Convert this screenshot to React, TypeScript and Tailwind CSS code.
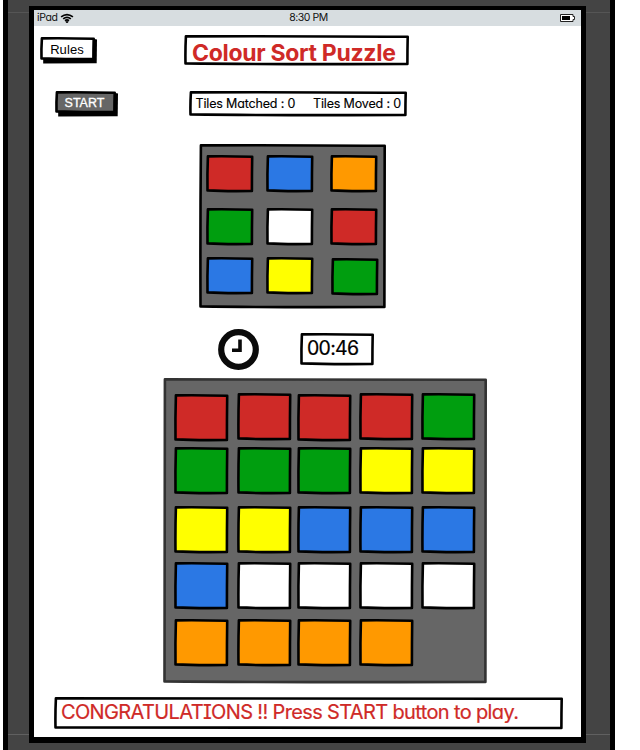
import type { ReactNode } from "react";

type FrameProps = {
  w: number;
  h: number;
  fill?: string;
  stroke?: string;
  line?: number;
  shadow?: boolean;
  className?: string;
  children?: ReactNode;
};

function Sketch({ w, h, fill = "#fff", stroke = "#000", line = 2.6, shadow, className = "", children }: FrameProps) {
  const r = w - 1.2;
  const b = h - 2;
  const outline = `M1.9 1.4 Q${w * 0.4} 0.9 ${r - 0.1} 1.8 Q${r - 0.4} ${h * 0.5} ${r - 0.4} ${b} Q${w * 0.4} ${b + 0.5} 1.5 ${b - 0.6} Q1.2 ${h * 0.5} 1.9 1.4Z`;
  return (
    <div className={`relative shrink-0 ${className}`} style={{ width: w, height: h }}>
      <svg className="absolute inset-0 overflow-visible" width={w} height={h}>
        {shadow && <path d={`M3 4 L${w - 2} 1.8 L${w + 2} 2.5 L${w + 1.7} ${h + 2.2} L3.2 ${h + 2.5}Z`} fill="#000" />}
        <path d={outline} fill={fill} stroke={stroke} strokeWidth={line} strokeLinejoin="round" strokeLinecap="round" />
      </svg>
      <div className="relative flex h-full items-center">{children}</div>
    </div>
  );
}

const RED = "#cf2a27";
const BLUE = "#2b78e4";
const ORANGE = "#ff9900";
const GREEN = "#009e0f";
const WHITE = "#ffffff";
const YELLOW = "#ffff00";

const target = [
  [RED, BLUE, ORANGE],
  [GREEN, WHITE, RED],
  [BLUE, YELLOW, GREEN],
];

const board = [
  [RED, RED, RED, RED, GREEN],
  [GREEN, GREEN, GREEN, YELLOW, YELLOW],
  [YELLOW, YELLOW, BLUE, BLUE, BLUE],
  [BLUE, WHITE, WHITE, WHITE, WHITE],
  [ORANGE, ORANGE, ORANGE, ORANGE],
];

const hand = "font-['Inter',sans-serif] [font-feature-settings:'cv11','cv08'] whitespace-nowrap leading-none";

function Rail({ className }: { className: string }) {
  return (
    <div className={`flex shrink-0 flex-col justify-between bg-[#444] pt-3 pb-[15px] ${className}`}>
      <div className="h-px bg-[#555]" />
      <div className="h-px bg-[#606060]" />
    </div>
  );
}

export default function App() {
  return (
    <div className="flex h-[750px] w-[640px] overflow-hidden bg-white pl-[3px]">
      <Rail className="w-[26px] border-l-[5px] border-black" />
      <div className="h-full w-[557px] shrink-0 bg-[#444] pt-[6px]">
        <div className="h-[737px] border-x-[5px] border-t-[4px] border-b-[6px] border-black bg-white">
          <header className={`grid h-4 grid-cols-3 items-center bg-[#d7dde0] pr-[6px] pl-[3px] text-[10.5px] text-[#111] ${hand}`}>
            <div className="flex items-center gap-[3px]">
              <span className="tracking-[-0.4px]">iPad</span>
              <svg width="14" height="10" viewBox="0 0 15 11" fill="none" stroke="#000" strokeWidth="1.9">
                <path d="M1 4.3Q7.5-.8 14 4.3M3.3 6.5Q7.5 3 11.7 6.5M5.3 8.5Q7.5 6.7 9.7 8.5" />
                <circle cx="7.5" cy="9.6" r=".5" />
              </svg>
            </div>
            <span className="pl-[5px] text-center tracking-[-0.5px]">8:30 PM</span>
            <svg className="justify-self-end" width="15" height="8" viewBox="0 0 15 8">
              <path d="M.5.5H13V2.5H14.5V5.5H13V7.5H.5Z" fill="#fff" stroke="#222" />
              <path d="M2 2H10V6H2Z" />
            </svg>
          </header>

          <div className="flex h-[65px] items-start pt-[9px] pl-[6px]">
            <Sketch w={55} h={24} shadow className="mt-[2px]">
              <button className="w-full pt-px pr-[1px] font-['Liberation_Sans',sans-serif] text-[13px] tracking-[0.1px]">Rules</button>
            </Sketch>
            <Sketch w={225} h={31} className="ml-[89px]">
              <h1 className={`pt-[5px] pl-[8px] text-[23px] font-bold tracking-[-0.3px] text-[#cf2a27] ${hand}`}>Colour Sort Puzzle</h1>
            </Sketch>
          </div>

          <div className="flex h-[53px] items-start pl-[21px]">
            <Sketch w={61} h={23} fill="#666" shadow>
              <button className="w-full pt-[2px] pr-[2px] font-['Liberation_Sans',sans-serif] text-[12.5px] text-white [-webkit-text-stroke:0.3px_white]">START</button>
            </Sketch>
            <Sketch w={218} h={26} className="ml-[73px]">
              <div className={`flex pt-px text-[12.5px] text-black [-webkit-text-stroke:0.15px_black] ${hand}`}>
                <span className="w-[117px] pl-[6.5px] tracking-[-0.16px]">Tiles Matched : 0</span>
                <span className="pl-[7px] tracking-[-0.16px]">Tiles Moved : 0</span>
              </div>
            </Sketch>
          </div>

          <Sketch w={187} h={165} fill="#666" className="ml-[165px]">
            <div className="grid h-full grid-cols-[60px_64px_47px] grid-rows-[52.5px_49px_38px] pt-[11px] pl-[7px]">
              {target.flatMap((row, y) =>
                row.map((color, x) => (
                  <Sketch key={`${y}-${x}`} w={47.5} h={38} fill={color} className={x === 2 && y === 2 ? "mt-[1.5px] ml-[1px]" : ""} />
                )),
              )}
            </div>
          </Sketch>

          <div className="flex h-[68.5px] items-start pt-5 pl-[184px]">
            <svg width="41" height="41" viewBox="0 0 41 41" fill="none" stroke="#0a0a0a">
              <circle cx="20.5" cy="20.5" r="17.3" strokeWidth="6.2" />
              <path d="M22 10.5V21.3H14" strokeWidth="3.6" />
            </svg>
            <Sketch w={74} h={33} className="mt-1 ml-[41px]">
              <time className={`pb-[2px] pl-[7px] text-[19.5px] tracking-[-0.7px] [-webkit-text-stroke:0.2px_black] ${hand}`}>00:46</time>
            </Sketch>
          </div>

          <Sketch w={324} h={306} fill="#666" stroke="#333" className="ml-[129px]">
            <div className="grid h-full grid-cols-[63px_60px_61.5px_62px_55px] grid-rows-[53px_59px_56px_57px_47px] pt-[16px] pl-[11px]">
              {board.flatMap((row, y) =>
                row.map((color, x) => (
                  <Sketch key={`${y}-${x}`} w={54.5} h={48} fill={color} className={y === 0 && (x === 1 || x > 2) ? "-mt-px" : ""} />
                )),
              )}
            </div>
          </Sketch>

          <Sketch w={509} h={33} className="mt-[13.5px] ml-5">
            <p className={`pb-[3px] pl-[7px] text-[20px] tracking-[-0.64px] text-[#cf2a27] [-webkit-text-stroke:0.2px_#cf2a27] ${hand}`}>CONGRATULATIONS !! Press START button to play.</p>
          </Sketch>
        </div>
      </div>
      <Rail className="w-[29px] border-r-[5px] border-black" />
    </div>
  );
}
